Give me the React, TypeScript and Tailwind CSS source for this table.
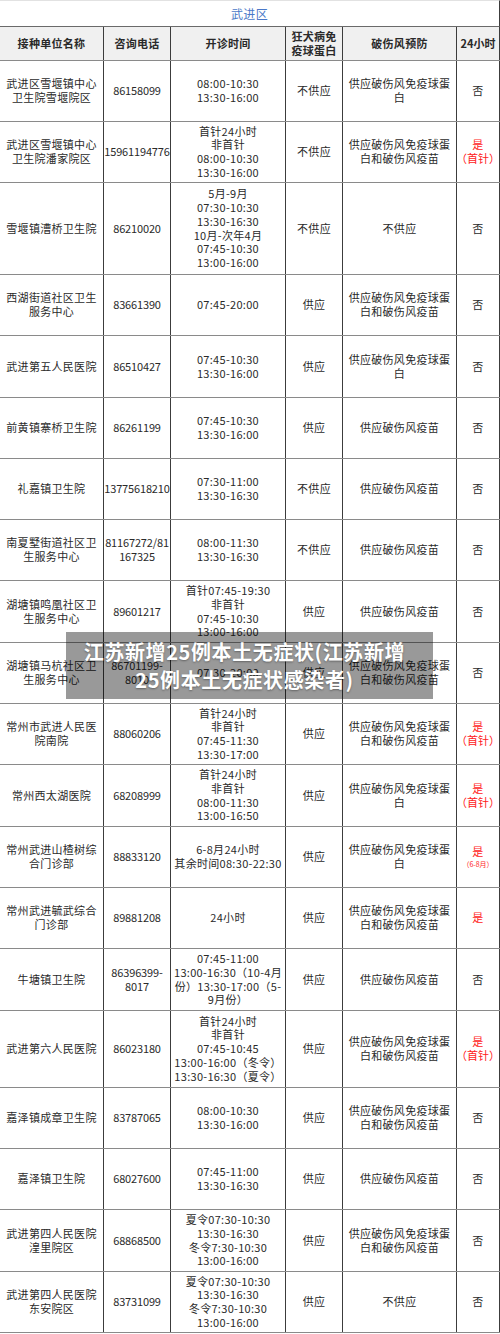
type Row = {
  h: string;
  name: string[];
  phone: string[];
  time: string[];
  rabies: string;
  tetanus: string[];
  yes: "否" | "是" | "是首针" | "是68";
};

const rows: Row[] = [
  { h: "h-[61px]", name: ["武进区雪堰镇中心", "卫生院雪堰院区"], phone: ["86158099"], time: ["08:00-10:30", "13:30-16:00"], rabies: "不供应", tetanus: ["供应破伤风免疫球蛋", "白"], yes: "否" },
  { h: "h-[61px]", name: ["武进区雪堰镇中心", "卫生院潘家院区"], phone: ["15961194776"], time: ["首针24小时", "非首针", "08:00-10:30", "13:30-16:00"], rabies: "不供应", tetanus: ["供应破伤风免疫球蛋", "白和破伤风疫苗"], yes: "是首针" },
  { h: "h-[92px]", name: ["雪堰镇漕桥卫生院"], phone: ["86210020"], time: ["5月-9月", "07:30-10:30", "13:30-16:30", "10月-次年4月", "07:45-10:30", "13:00-16:00"], rabies: "不供应", tetanus: ["不供应"], yes: "否" },
  { h: "h-[61px]", name: ["西湖街道社区卫生", "服务中心"], phone: ["83661390"], time: ["07:45-20:00"], rabies: "供应", tetanus: ["供应破伤风免疫球蛋", "白和破伤风疫苗"], yes: "否" },
  { h: "h-[62px]", name: ["武进第五人民医院"], phone: ["86510427"], time: ["07:45-10:30", "13:30-16:00"], rabies: "供应", tetanus: ["供应破伤风免疫球蛋", "白"], yes: "否" },
  { h: "h-[61px]", name: ["前黄镇寨桥卫生院"], phone: ["86261199"], time: ["07:45-10:30", "13:30-16:00"], rabies: "供应", tetanus: ["供应破伤风疫苗"], yes: "否" },
  { h: "h-[61px]", name: ["礼嘉镇卫生院"], phone: ["13775618210"], time: ["07:30-11:00", "13:30-16:30"], rabies: "不供应", tetanus: ["供应破伤风疫苗"], yes: "否" },
  { h: "h-[61px]", name: ["南夏墅街道社区卫", "生服务中心"], phone: ["81167272/81", "167325"], time: ["08:00-11:30", "13:30-16:30"], rabies: "不供应", tetanus: ["供应破伤风疫苗"], yes: "否" },
  { h: "h-[62px]", name: ["湖塘镇鸣凰社区卫", "生服务中心"], phone: ["89601217"], time: ["首针07:45-19:30", "非首针", "07:45-10:30", "13:00-16:00"], rabies: "供应", tetanus: ["供应破伤风疫苗"], yes: "否" },
  { h: "h-[61px]", name: ["湖塘镇马杭社区卫", "生服务中心"], phone: ["86701199-", "8010"], time: ["07:30-20:00"], rabies: "供应", tetanus: ["供应破伤风免疫球蛋", "白和破伤风疫苗"], yes: "否" },
  { h: "h-[61px]", name: ["常州市武进人民医", "院南院"], phone: ["88060206"], time: ["首针24小时", "非首针", "07:45-11:30", "13:30-17:00"], rabies: "供应", tetanus: ["供应破伤风免疫球蛋", "白和破伤风疫苗"], yes: "是首针" },
  { h: "h-[62px]", name: ["常州西太湖医院"], phone: ["68208999"], time: ["首针24小时", "非首针", "08:00-11:30", "13:00-16:50"], rabies: "供应", tetanus: ["供应破伤风免疫球蛋", "白"], yes: "是首针" },
  { h: "h-[61px]", name: ["常州武进山楂树综", "合门诊部"], phone: ["88833120"], time: ["6-8月24小时", "其余时间08:30-22:30"], rabies: "供应", tetanus: ["供应破伤风免疫球蛋", "白"], yes: "是68" },
  { h: "h-[61px]", name: ["常州武进毓武综合", "门诊部"], phone: ["89881208"], time: ["24小时"], rabies: "供应", tetanus: ["供应破伤风免疫球蛋", "白和破伤风疫苗"], yes: "是" },
  { h: "h-[62px]", name: ["牛塘镇卫生院"], phone: ["86396399-", "8017"], time: ["07:45-11:00", "13:00-16:30（10-4月", "份）13:30-17:00（5-", "9月份）"], rabies: "供应", tetanus: ["供应破伤风疫苗"], yes: "否" },
  { h: "h-[77px]", name: ["武进第六人民医院"], phone: ["86023180"], time: ["首针24小时", "非首针", "07:45-10:45", "13:00-16:00（冬令）", "13:30-16:30（夏令）"], rabies: "供应", tetanus: ["供应破伤风免疫球蛋", "白和破伤风疫苗"], yes: "是首针" },
  { h: "h-[61px]", name: ["嘉泽镇成章卫生院"], phone: ["83787065"], time: ["08:00-10:30", "13:30-16:00"], rabies: "供应", tetanus: ["供应破伤风免疫球蛋", "白和破伤风疫苗"], yes: "否" },
  { h: "h-[61px]", name: ["嘉泽镇卫生院"], phone: ["68027600"], time: ["07:45-11:00", "13:30-16:30"], rabies: "供应", tetanus: ["供应破伤风疫苗"], yes: "否" },
  { h: "h-[62px]", name: ["武进第四人民医院", "湟里院区"], phone: ["68868500"], time: ["夏令07:30-10:30", "13:30-16:30", "冬令7:30-10:30", "13:00-16:00"], rabies: "供应", tetanus: ["供应破伤风免疫球蛋", "白和破伤风疫苗"], yes: "否" },
  { h: "h-[61px]", name: ["武进第四人民医院", "东安院区"], phone: ["83731099"], time: ["夏令07:30-10:30", "13:30-16:30", "冬令7:30-10:30", "13:00-16:00"], rabies: "供应", tetanus: ["不供应"], yes: "否" },
];

const grid = "grid grid-cols-[104px_67px_115px_57px_114px_43px]";
const cell = "flex flex-col items-center justify-center text-center border-r border-[#3c3c3c]";

function Lines({ lines }: { lines: string[] }) {
  return (
    <>
      {lines.map((l, i) => (
        <div key={i} className="whitespace-nowrap">
          {l}
        </div>
      ))}
    </>
  );
}

function YesCell({ v }: { v: Row["yes"] }) {
  if (v === "否") return <div>否</div>;
  return (
    <div className="text-[#ff1a1a]">
      <div>是</div>
      {v === "是首针" && <div className="whitespace-nowrap tracking-normal">（首针）</div>}
      {v === "是68" && <div className="whitespace-nowrap tracking-normal text-[7px] leading-[10px]">（6-8月）</div>}
    </div>
  );
}

export default function App() {
  return (
    <div className="relative w-[500px] bg-white text-[#2a2a2a] font-['Noto_Sans_CJK_SC','Noto_Sans',sans-serif] text-[11px] leading-[13.7px] tracking-[0.3px]">
      {/* title */}
      <div className="h-[27px] flex items-center justify-center border-t border-[#e2e2e2] border-b border-b-[#6a6a6a] border-r border-r-[#3c3c3c] text-[12px] text-[#4a78c8]">
        武进区
      </div>

      {/* header */}
      <div className={`${grid} h-[34px] bg-[#f0f0f0] border-b border-[#8a8a8a] font-bold text-[11px]`}>
        <div className={cell}>接种单位名称</div>
        <div className={cell}>咨询电话</div>
        <div className={cell}>开诊时间</div>
        <div className={cell}>
          <div>狂犬病免</div>
          <div>疫球蛋白</div>
        </div>
        <div className={cell}>破伤风预防</div>
        <div className={`${cell} tracking-normal`}>24小时</div>
      </div>

      {/* body */}
      {rows.map((r, i) => (
        <div key={i} className={`${grid} ${r.h} border-b border-[#8a8a8a]`}>
          <div className={cell}>
            <Lines lines={r.name} />
          </div>
          <div className={`${cell} tracking-[-0.15px]`}>
            <Lines lines={r.phone} />
          </div>
          <div className={cell}>
            <Lines lines={r.time} />
          </div>
          <div className={cell}>{r.rabies}</div>
          <div className={cell}>
            <Lines lines={r.tetanus} />
          </div>
          <div className={cell}>
            <YesCell v={r.yes} />
          </div>
        </div>
      ))}

      {/* caption overlay */}
      <div className="absolute left-[66px] top-[632px] w-[367px] h-[67px] bg-black/40 flex flex-col justify-center pr-[10px] text-center text-white font-bold text-[20px] leading-[28px] tracking-[0.6px] [text-shadow:0_1px_2px_rgba(0,0,0,0.35)]">
        <div className="whitespace-nowrap">江苏新增25例本土无症状(江苏新增</div>
        <div className="whitespace-nowrap">25例本土无症状感染者)</div>
      </div>
    </div>
  );
}
